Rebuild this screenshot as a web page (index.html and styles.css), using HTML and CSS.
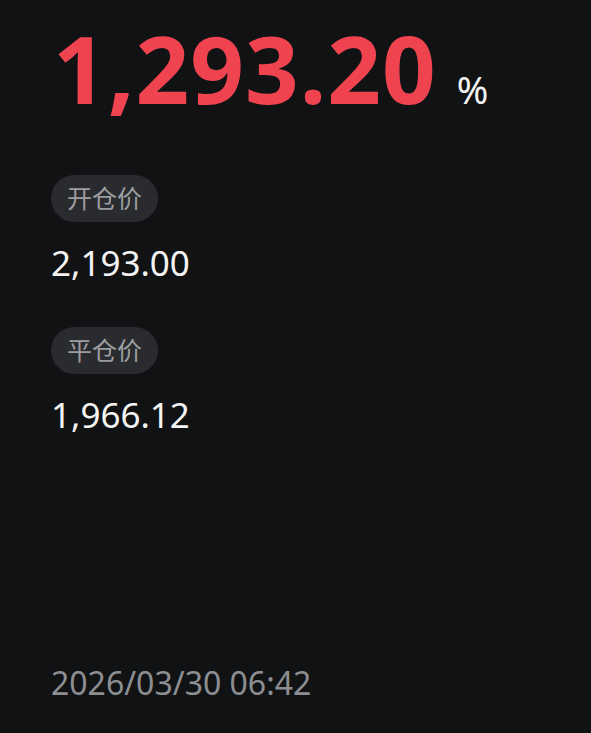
FILE: index.html
```html
<!DOCTYPE html>
<html lang="zh-CN">
<head>
    <meta charset="UTF-8">
    <meta name="viewport" content="width=device-width, initial-scale=1.0">
    <title>收益</title>
    <link rel="stylesheet" href="styles.css">
</head>
<body>
    <div class="card">
        <div class="profit">
            <span class="profit-value">1,293.20</span>
            <span class="profit-unit">%</span>
        </div>

        <div class="price-block">
            <span class="tag">开仓价</span>
            <div class="price">2,193.00</div>
        </div>

        <div class="price-block">
            <span class="tag">平仓价</span>
            <div class="price">1,966.12</div>
        </div>

        <div class="time">2026/03/30 06:42</div>
    </div>
</body>
</html>
```

FILE: styles.css
```css
html, body {
    margin: 0;
    padding: 0;
    background: #111214;
}

body {
    font-family: "Noto Sans", "Noto Sans CJK SC", sans-serif;
    color: #f2f2f2;
}

.card {
    box-sizing: border-box;
    height: 733px;
    padding: 17px 0 0 51px;
    display: flex;
    flex-direction: column;
    align-items: flex-start;
}

.profit {
    display: flex;
    align-items: baseline;
    gap: 20px;
    margin-left: 2px;
}

.profit-value {
    font-size: 94px;
    font-weight: 700;
    color: #ef4450;
    line-height: 1.1;
    letter-spacing: 1px;
}

.profit-unit {
    font-size: 38px;
    color: #f2f2f2;
}

.price-block {
    display: flex;
    flex-direction: column;
    align-items: flex-start;
    margin-top: 55px;
}

.price-block + .price-block {
    margin-top: 43px;
}

.tag {
    box-sizing: border-box;
    height: 47px;
    padding: 0 16px;
    border-radius: 24px;
    background: #2a2b2e;
    color: #9c9da0;
    font-size: 25px;
    line-height: 47px;
}

.price {
    margin-top: 20px;
    font-size: 35px;
    line-height: 1.2;
    color: #f4f4f4;
}

.time {
    margin-top: auto;
    margin-bottom: 29px;
    font-size: 32px;
    color: #8d8e91;
}
```
